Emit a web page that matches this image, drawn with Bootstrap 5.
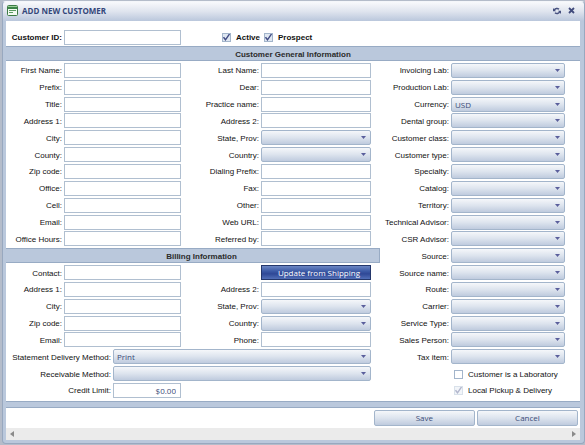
<!DOCTYPE html>
<html lang="en">
<head>
<meta charset="utf-8">
<meta name="viewport" content="width=device-width, initial-scale=1">
<title>Add New Customer</title>
<link href="https://cdn.jsdelivr.net/npm/bootstrap@5.3.0/dist/css/bootstrap.min.css" rel="stylesheet">
<style>
  body { font: 8px/12px "Liberation Sans", Arial, sans-serif; color: #111; background: #b4bcca; }
  .dialog-frame { margin: 1px 0 1px 2px; background: #bac8dc; border: 1px solid #98a8bf; border-top-color: #f4f6fa; border-radius: 4px; overflow: hidden; }
  .title-bar { height: 19px; padding-bottom: 2px; background: linear-gradient(#f8f9fc, #dfe4ee 50%, #bac7dc); }
  .title-bar h1 { font: bold 8px/14px "Open Sans", "Noto Sans", sans-serif; color: #34477a; }
  .tool { width: 10px; height: 12px; line-height: 0; }
  .sheet { margin: 0 4px 3px 3px; background: #fff; }
  .top-row { padding: 8px 0 1px; }
  .band { flex: none; height: 15px; background: #bac8dc; border: 1px solid #98abc4; border-width: 1px 0; font-weight: bold; line-height: 15px; font-size: 8px; color: #2b2b2b; text-align: center; margin: 0; }
  .band-billing { border-right-width: 1px; padding-left: 18px; }
  .rule { height: 7px; background: #bac8dc; border: 1px solid #98abc4; border-width: 1px 0; }
  .fields { padding: 1px 0 2px; }
  .side-left { flex: 374 1 0; min-width: 0; }
  .side-right { flex: 200 1 0; min-width: 0; }
  .line { flex: 1 1 0; min-height: 16px; display: grid; align-items: center; }
  .line-four { grid-template-columns: 58fr 117fr 80fr 110fr 9fr; }
  .line-top { grid-template-columns: 58fr 117fr 41fr 358fr; }
  .line-wide { grid-template-columns: 107fr 68fr 190fr 9fr; }
  .line-wide .form-select { grid-column: span 2; }
  .line-side { grid-template-columns: 71fr 114fr 15fr; }
  .line label { white-space: nowrap; padding-top: 2px; }
  .line > label { text-align: right; padding-right: 2px; min-width: 0; }
  .form-control, .form-select { height: 15px; min-height: 0; min-width: 0; width: 100%; padding: 0 4px; border: 1px solid #b0bfd0; border-radius: 0; font: 8px/13px "Open Sans", "Noto Sans", sans-serif; color: #3a4b78; }
  .form-select { padding: 0 3px; border-color: #a3b5cb; border-radius: 2px; background: url("data:image/svg+xml,%3Csvg xmlns='http://www.w3.org/2000/svg' viewBox='0 0 5 3'%3E%3Cpath fill='%235a5f9c' d='M0 0h5L2.500 3z'/%3E%3C/svg%3E") no-repeat right 4px center / 5px 3px, linear-gradient(#f5f7fa, #dde4ee 50%, #bfcbde); }
  .btn-soft { flex: 101 1 0; height: 16px; padding: 0; border: 1px solid #a3b5cb; border-radius: 2px; background: linear-gradient(#f5f7fa, #dde4ee 50%, #bfcbde); font: 8px/14px "Open Sans", "Noto Sans", sans-serif; color: #3a4b78; }
  .btn-deep { height: 15px; padding: 0 10px 0 0; text-align: right; border: 1px solid #24376b; border-radius: 0; background: linear-gradient(#6c87c4, #3c5aa6 40%, #2f4896 60%, #526fb8); font: 8px/13px "Open Sans", "Noto Sans", sans-serif; color: #fff; white-space: nowrap; }
  .form-check-input { flex: none; width: 9px; height: 9px; margin: 1px 0 0; border: 1px solid #a3b5cb; border-radius: 0 !important; background-color: #fff; }
  .form-check-input:checked { border-color: #a3b5cb; background: #dfe7f1 url("data:image/svg+xml,%3Csvg xmlns='http://www.w3.org/2000/svg' viewBox='0 0 9 9'%3E%3Cpath fill='none' stroke='%23414b83' stroke-width='1.400' d='M1.500 4.200l2 2.600L7.500 1'/%3E%3C/svg%3E") center / 9px 9px; }
  .form-check-input:disabled { opacity: .4; }
  .form-check-input:disabled ~ label { opacity: 1; }
  .option { gap: 5px; white-space: nowrap; }
  .line-side .option { grid-column: 2 / 4; padding-left: 3px; }
  .foot { padding: 2px 2px 2px; gap: 2px; }
  .foot-space { flex: 371 1 0; }
  .scroll-track { height: 12px; background: #ebebeb; padding: 0 4px; }
</style>
</head>
<body class="min-vh-100 d-flex flex-column m-0">
<main class="dialog-frame flex-fill d-flex flex-column">
  <header class="title-bar d-flex align-items-center">
    <svg class="ms-1 me-1" width="11" height="11" viewBox="0 0 11 11" aria-hidden="true"><rect x=".5" y=".5" width="10" height="10" rx="1" fill="#f3faf2" stroke="#3c7b45"/><path fill="#3c8548" d="M1 1h9v3H1z"/><path fill="#9ccf9b" d="M1 1h9v1H1z"/><path stroke="#5b9b62" d="M2 5.500h7M2 7.500h4"/></svg>
    <h1 class="m-0 flex-fill">ADD NEW CUSTOMER</h1>
    <button type="button" class="tool btn p-0 border-0" aria-label="Refresh"><svg width="8" height="8" viewBox="0 0 8 8" fill="none" stroke="#46507f" stroke-width="1.500"><path d="M1.200 3.500C2 1.300 4.500 1 6 2.300M6.800 4.500C6 6.700 3.500 7 2 5.700"/><path fill="#46507f" stroke="none" d="M0 1v3.200h3zM8 7V3.800H5z"/></svg></button>
    <button type="button" class="tool btn p-0 border-0 ms-1 me-2" aria-label="Close"><svg width="7" height="7" viewBox="0 0 7 7" stroke="#414b7c" stroke-width="1.800"><path d="M1 1l5 5M6 1L1 6"/></svg></button>
  </header>
  <form class="sheet flex-fill d-flex flex-column">
    <div class="top-row">
      <div class="line line-top fw-bold">
        <label for="cid">Customer ID:</label><input class="form-control" id="cid"><span></span>
        <div class="d-flex">
          <div class="option d-flex align-items-center me-1"><input class="form-check-input" type="checkbox" id="active" checked><label for="active">Active</label></div>
          <div class="option d-flex align-items-center"><input class="form-check-input" type="checkbox" id="prospect" checked><label for="prospect">Prospect</label></div>
        </div>
      </div>
    </div>
    <h2 class="band">Customer General Information</h2>
    <div class="fields flex-fill d-flex">
      <div class="side-left d-flex flex-column">
        <div class="line line-four"><label for="first">First Name:</label><input class="form-control" id="first"><label for="last">Last Name:</label><input class="form-control" id="last"></div>
        <div class="line line-four"><label for="prefix">Prefix:</label><input class="form-control" id="prefix"><label for="dear">Dear:</label><input class="form-control" id="dear"></div>
        <div class="line line-four"><label for="jobtitle">Title:</label><input class="form-control" id="jobtitle"><label for="practice">Practice name:</label><input class="form-control" id="practice"></div>
        <div class="line line-four"><label for="addr1">Address 1:</label><input class="form-control" id="addr1"><label for="addr2">Address 2:</label><input class="form-control" id="addr2"></div>
        <div class="line line-four"><label for="city">City:</label><input class="form-control" id="city"><label for="state">State, Prov:</label><select class="form-select" id="state"></select></div>
        <div class="line line-four"><label for="county">County:</label><input class="form-control" id="county"><label for="country">Country:</label><select class="form-select" id="country"></select></div>
        <div class="line line-four"><label for="zip">Zip code:</label><input class="form-control" id="zip"><label for="dial">Dialing Prefix:</label><input class="form-control" id="dial"></div>
        <div class="line line-four"><label for="office">Office:</label><input class="form-control" id="office"><label for="fax">Fax:</label><input class="form-control" id="fax"></div>
        <div class="line line-four"><label for="cell">Cell:</label><input class="form-control" id="cell"><label for="other">Other:</label><input class="form-control" id="other"></div>
        <div class="line line-four"><label for="email">Email:</label><input class="form-control" id="email"><label for="web">Web URL:</label><input class="form-control" id="web"></div>
        <div class="line line-four"><label for="hours">Office Hours:</label><input class="form-control" id="hours"><label for="referred">Referred by:</label><input class="form-control" id="referred"></div>
        <div class="line"><h2 class="band band-billing">Billing Information</h2></div>
        <div class="line line-four"><label for="contact">Contact:</label><input class="form-control" id="contact"><span></span><button type="button" class="btn btn-deep">Update from Shipping</button></div>
        <div class="line line-four"><label for="baddr1">Address 1:</label><input class="form-control" id="baddr1"><label for="baddr2">Address 2:</label><input class="form-control" id="baddr2"></div>
        <div class="line line-four"><label for="bcity">City:</label><input class="form-control" id="bcity"><label for="bstate">State, Prov:</label><select class="form-select" id="bstate"></select></div>
        <div class="line line-four"><label for="bzip">Zip code:</label><input class="form-control" id="bzip"><label for="bcountry">Country:</label><select class="form-select" id="bcountry"></select></div>
        <div class="line line-four"><label for="bemail">Email:</label><input class="form-control" id="bemail"><label for="bphone">Phone:</label><input class="form-control" id="bphone"></div>
        <div class="line line-wide"><label for="statement">Statement Delivery Method:</label><select class="form-select" id="statement"><option>Print</option></select></div>
        <div class="line line-wide"><label for="receivable">Receivable Method:</label><select class="form-select" id="receivable"></select></div>
        <div class="line line-wide"><label for="credit">Credit Limit:</label><input class="form-control text-end" id="credit" value="$0.00"></div>
      </div>
      <div class="side-right d-flex flex-column">
        <div class="line line-side"><label for="invlab">Invoicing Lab:</label><select class="form-select" id="invlab"></select></div>
        <div class="line line-side"><label for="prodlab">Production Lab:</label><select class="form-select" id="prodlab"></select></div>
        <div class="line line-side"><label for="currency">Currency:</label><select class="form-select" id="currency"><option>USD</option></select></div>
        <div class="line line-side"><label for="dental">Dental group:</label><select class="form-select" id="dental"></select></div>
        <div class="line line-side"><label for="cclass">Customer class:</label><select class="form-select" id="cclass"></select></div>
        <div class="line line-side"><label for="ctype">Customer type:</label><select class="form-select" id="ctype"></select></div>
        <div class="line line-side"><label for="specialty">Specialty:</label><select class="form-select" id="specialty"></select></div>
        <div class="line line-side"><label for="catalog">Catalog:</label><select class="form-select" id="catalog"></select></div>
        <div class="line line-side"><label for="territory">Territory:</label><select class="form-select" id="territory"></select></div>
        <div class="line line-side"><label for="tech">Technical Advisor:</label><select class="form-select" id="tech"></select></div>
        <div class="line line-side"><label for="csr">CSR Advisor:</label><select class="form-select" id="csr"></select></div>
        <div class="line line-side"><label for="source">Source:</label><select class="form-select" id="source"></select></div>
        <div class="line line-side"><label for="sourcename">Source name:</label><select class="form-select" id="sourcename"></select></div>
        <div class="line line-side"><label for="route">Route:</label><select class="form-select" id="route"></select></div>
        <div class="line line-side"><label for="carrier">Carrier:</label><select class="form-select" id="carrier"></select></div>
        <div class="line line-side"><label for="service">Service Type:</label><select class="form-select" id="service"></select></div>
        <div class="line line-side"><label for="sales">Sales Person:</label><select class="form-select" id="sales"></select></div>
        <div class="line line-side"><label for="tax">Tax item:</label><select class="form-select" id="tax"></select></div>
        <div class="line line-side"><div class="option d-flex align-items-center"><input class="form-check-input" type="checkbox" id="islab"><label for="islab">Customer is a Laboratory</label></div></div>
        <div class="line line-side"><div class="option d-flex align-items-center"><input class="form-check-input" type="checkbox" id="pickup" checked disabled><label for="pickup">Local Pickup &amp; Delivery</label></div></div>
      </div>
    </div>
    <div class="rule"></div>
    <div class="foot d-flex">
      <div class="foot-space"></div>
      <button type="button" class="btn btn-soft">Save</button>
      <button type="button" class="btn btn-soft">Cancel</button>
    </div>
    <div class="scroll-track d-flex align-items-center justify-content-between">
      <svg width="4" height="6" viewBox="0 0 4 6" fill="#8a8a8a" aria-hidden="true"><path d="M4 0v6L0 3z"/></svg>
      <svg width="4" height="6" viewBox="0 0 4 6" fill="#8a8a8a" aria-hidden="true"><path d="M0 0v6l4-3z"/></svg>
    </div>
  </form>
</main>
<script src="https://cdn.jsdelivr.net/npm/bootstrap@5.3.0/dist/js/bootstrap.bundle.min.js"></script>
</body>
</html>
